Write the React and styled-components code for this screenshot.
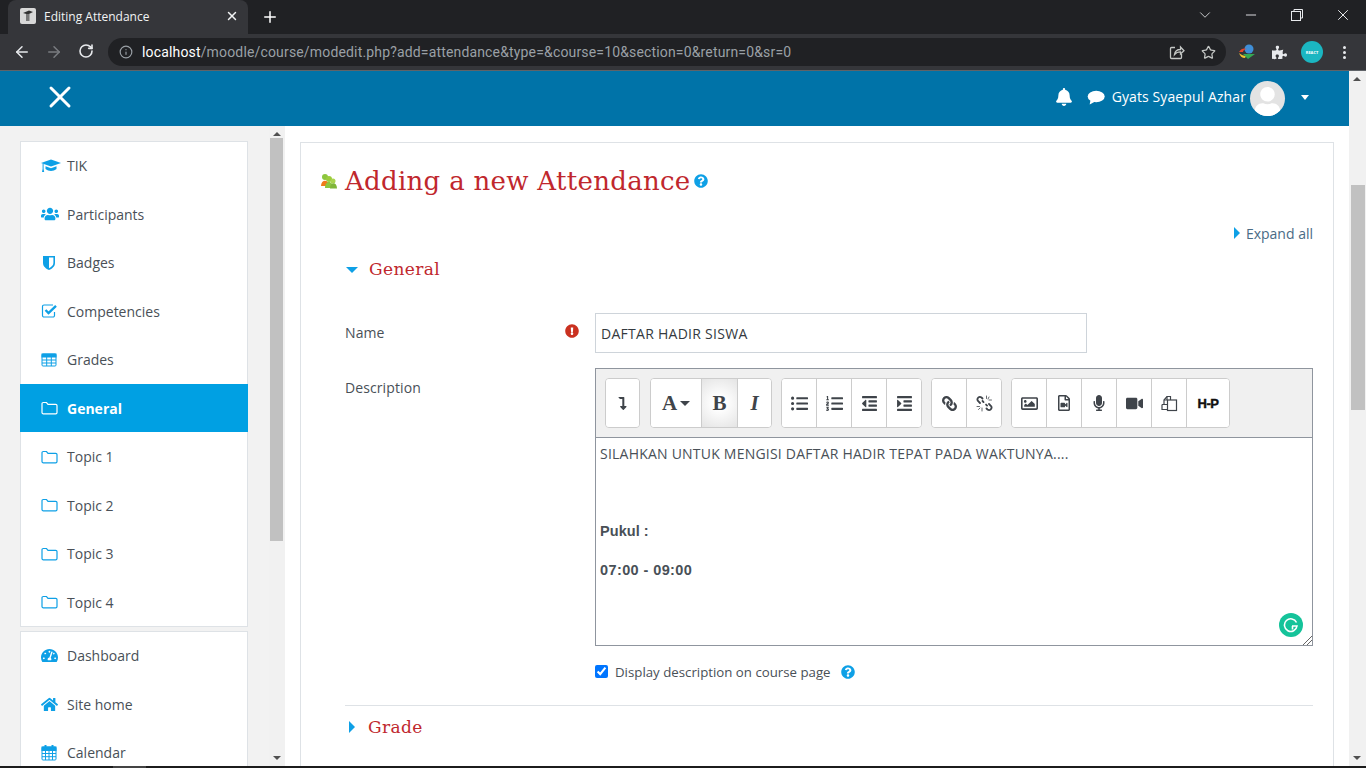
import React from "react";
import styled, { createGlobalStyle } from "styled-components";
import { ArrowLeft, ArrowRight, RotateCw, Info, Star, Plus, X, ChevronDown, Minus } from "lucide-react";
import {
  FaUsers, FaTachometerAlt, FaHome, FaBell, FaPuzzlePiece,
  FaQuestionCircle, FaExclamationCircle, FaListUl, FaListOl, FaOutdent, FaIndent,
  FaLink, FaRegImage, FaRegFileVideo, FaMicrophone, FaVideo,
  FaLevelDownAlt, FaUser,
} from "react-icons/fa";

const GlobalStyle = createGlobalStyle`
  html, body {
    margin: 0;
    padding: 0;
    overflow: hidden;
  }
  body {
    font-family: "Open Sans", "Liberation Sans", sans-serif;
    font-size: 14px;
    color: #495057;
  }
`;

const Page = styled.div`
  width: 1366px;
  height: 768px;
  display: flex;
  flex-direction: column;
  overflow: hidden;
  background: #fff;
`;

/* browser chrome */
const TabStrip = styled.div`
  height: 34px;
  background: #202124;
  display: flex;
  align-items: flex-end;
  padding-left: 8px;
  color: #fff;
  flex-shrink: 0;
`;
const Tab = styled.div`
  width: 240px;
  height: 34px;
  background: #35363a;
  border-radius: 8px 8px 0 0;
  display: flex;
  align-items: center;
  padding: 0 9px 2px 12px;
  box-sizing: border-box;
  font-size: 12px;
  color: #f1f3f4;
`;
const TabTitle = styled.span`
  flex: 1;
  margin-left: 8px;
`;
const NewTab = styled.div`
  width: 44px;
  height: 34px;
  display: flex;
  align-items: center;
  justify-content: center;
`;
const WindowButtons = styled.div`
  margin-left: auto;
  display: flex;
  height: 30px;
  align-self: flex-start;
  align-items: center;
`;
const WindowButton = styled.div`
  width: 46px;
  display: flex;
  justify-content: center;
  color: #e8eaed;
`;
const Toolbar = styled.div`
  height: 36px;
  background: #35363a;
  border-bottom: 1px solid #5f6368;
  display: flex;
  align-items: center;
  flex-shrink: 0;
`;
const NavButton = styled.div`
  width: 32px;
  display: flex;
  justify-content: center;
  color: ${(p) => (p.$off ? "#7a7c80" : "#e8eaed")};
`;
const NavButtons = styled.div`
  display: flex;
  padding-left: 6px;
  margin-right: 6px;
`;
const Omnibox = styled.div`
  width: 1118px;
  height: 28px;
  background: #202124;
  border-radius: 14px;
  display: flex;
  align-items: center;
  padding: 0 10px 0 11px;
  box-sizing: border-box;
  font-family: "Roboto", "Open Sans", sans-serif;
  font-size: 14px;
  color: #9aa0a6;
`;
const Url = styled.span`
  margin-left: 9px;
  flex: 1;
  letter-spacing: 0.16px;
  b {
    font-weight: 400;
    color: #fff;
  }
`;
const OmniActions = styled.div`
  display: flex;
  gap: 16px;
  align-items: center;
  color: #c4c7c5;
`;
const Extensions = styled.div`
  display: flex;
  align-items: center;
  padding-left: 12px;
  color: #e8eaed;
`;
const ProfileDot = styled.div`
  width: 22px;
  height: 22px;
  border-radius: 50%;
  background: #1bb6c1;
  color: #fff;
  font-size: 4px;
  font-weight: 700;
  margin-left: 14px;
  display: flex;
  align-items: center;
  justify-content: center;
`;
const PuzzleSlot = styled.span`
  display: flex;
  margin-left: 16px;
`;
const MenuDots = styled.div`
  display: flex;
  flex-direction: column;
  gap: 2px;
  margin-left: 20px;
  i {
    width: 3px;
    height: 3px;
    border-radius: 50%;
    background: #e8eaed;
  }
`;

/* moodle layout */
const Viewport = styled.div`
  flex: 1;
  min-height: 0;
  display: flex;
`;
const LeftPart = styled.div`
  flex: 1;
  min-width: 0;
  display: flex;
  flex-direction: column;
`;
const Navbar = styled.div`
  height: 55px;
  background: #0073a8;
  display: flex;
  align-items: center;
  padding: 0 40px 0 42px;
  color: #fff;
  flex-shrink: 0;
`;
const MenuClose = styled.span`
  display: flex;
  margin-bottom: 3px;
`;
const NavRight = styled.div`
  margin-left: auto;
  display: flex;
  align-items: center;
  margin-bottom: 3px;
`;
const ChatSlot = styled.span`
  display: flex;
  margin-left: 14px;
`;
const UserName = styled.span`
  font-size: 14px;
  letter-spacing: 0.1px;
  margin: 0 0 1px 7px;
`;
const Avatar = styled.div`
  width: 35px;
  height: 35px;
  border-radius: 50%;
  background: #e3e3e3;
  margin: 0 0 -3px 4px;
  overflow: hidden;
  display: flex;
  align-items: flex-end;
  justify-content: center;
  color: #fff;
`;
const Caret = styled.i`
  width: 0;
  height: 0;
  border-left: 4.5px solid transparent;
  border-right: 4.5px solid transparent;
  border-top: 5px solid #fff;
  margin-left: 16px;
`;
const Workspace = styled.div`
  flex: 1;
  min-height: 0;
  display: flex;
`;
const SidePanel = styled.div`
  width: 269px;
  flex-shrink: 0;
  background: #f2f2f2;
  padding: 14.5px 21px 0 20px;
  box-sizing: border-box;
  overflow: hidden;
`;
const NavGroup = styled.div`
  background: #fff;
  border: 1px solid #dee2e6;
  margin-bottom: 3.5px;
`;
const NavItem = styled.div`
  height: ${(p) => (p.$active ? "48px" : "48.5px")};
  box-sizing: border-box;
  display: flex;
  align-items: center;
  font-size: 14px;
  color: ${(p) => (p.$active ? "#fff" : "#495057")};
  font-weight: ${(p) => (p.$active ? 700 : 400)};
  background: ${(p) => (p.$active ? "#00a0e3" : "#fff")};
  margin: ${(p) => (p.$active ? "0 -1px 0.5px" : "0")};
  padding-left: ${(p) => (p.$active ? "21px" : "20px")};
  & + & {
    border-top: ${(p) => (p.$active ? "none" : "1px solid #dee2e6")};
  }
  &:last-child {
    height: 48px;
  }
`;
const NavIcon = styled.span`
  width: 26px;
  display: flex;
  color: ${(p) => (p.$active ? "#fff" : "#0ea0e6")};
`;
const ScrollTrack = styled.div`
  width: ${(p) => p.$w}px;
  flex-shrink: 0;
  background: #f1f1f1;
  display: flex;
  flex-direction: column;
  align-items: flex-start;
  padding-left: ${(p) => p.$inset}px;
  box-sizing: border-box;
  position: relative;
`;
const ScrollThumb = styled.div`
  width: ${(p) => p.$w}px;
  height: ${(p) => p.$h}px;
  margin-top: ${(p) => p.$top}px;
  background: #c1c1c1;
`;
const ArrowUp = styled.i`
  position: absolute;
  top: 6px;
  left: 4px;
  width: 0;
  height: 0;
  border-left: 4px solid transparent;
  border-right: 4px solid transparent;
  border-bottom: 4px solid #505050;
`;
const ArrowDown = styled.i`
  position: absolute;
  bottom: 6px;
  left: 4px;
  width: 0;
  height: 0;
  border-left: 4px solid transparent;
  border-right: 4px solid transparent;
  border-top: 4px solid #505050;
`;
const Main = styled.div`
  flex: 1;
  min-width: 0;
  padding: 16px 15px 0;
  overflow: hidden;
`;
const Card = styled.div`
  border: 1px solid #dee2e6;
  border-bottom: none;
  height: 800px;
  padding: 0 20px 0 44px;
`;
const TitleRow = styled.div`
  height: 36px;
  margin: 20px 0 0 -25px;
  display: flex;
  align-items: center;
`;
const Title = styled.h2`
  margin: 0 3px 0 8px;
  font-family: "DejaVu Serif", "Liberation Serif", serif;
  font-weight: 400;
  font-size: 26px;
  letter-spacing: 0.3px;
  color: #c0272d;
  white-space: nowrap;
`;
const ExpandRow = styled.div`
  height: 20px;
  margin-top: 24px;
  display: flex;
  justify-content: flex-end;
  align-items: center;
  color: #4a6b85;
  font-size: 14px;
`;
const Legend = styled.div`
  height: 24px;
  margin-top: ${(p) => p.$top}px;
  display: flex;
  align-items: center;
  font-family: "DejaVu Serif", "Liberation Serif", serif;
  font-size: 17px;
  letter-spacing: 0.4px;
  color: #c0272d;
`;
const TriDown = styled.i`
  width: 0;
  height: 0;
  margin: 1px 11px 0 1px;
  border-left: 6.5px solid transparent;
  border-right: 6.5px solid transparent;
  border-top: 6.5px solid #0ea0e6;
`;
const TriRight = styled.i`
  width: 0;
  height: 0;
  margin-left: ${(p) => p.$left || 0}px;
  margin-right: ${(p) => p.$right || 0}px;
  border-top: 6.5px solid transparent;
  border-bottom: 6.5px solid transparent;
  border-left: 6.5px solid #0ea0e6;
`;
const FormRow = styled.div`
  display: flex;
  margin-top: ${(p) => p.$top}px;
`;
const LabelCell = styled.div`
  width: 250px;
  flex-shrink: 0;
  display: flex;
  justify-content: space-between;
  align-items: ${(p) => (p.$top ? "flex-start" : "center")};
  padding: ${(p) => (p.$top ? "8.5px 16px 0 0" : "0 16px 2px 0")};
  box-sizing: border-box;
  font-size: 14px;
  letter-spacing: 0.1px;
  line-height: 21px;
`;
const ErrorIcon = styled.span`
  display: flex;
  color: #ca3120;
  margin-bottom: 2px;
`;
const TextInput = styled.div`
  width: 492px;
  height: 40px;
  border: 1px solid #ced4da;
  box-sizing: border-box;
  display: flex;
  align-items: center;
  padding-left: 5px;
  font-size: 14px;
  letter-spacing: 0.27px;
  color: #343a40;
`;
const Editor = styled.div`
  width: 718px;
  height: 278px;
  border: 1px solid #8f959e;
  box-sizing: border-box;
  position: relative;
`;
const EditorBar = styled.div`
  height: 69px;
  background: #f0f0f0;
  border-bottom: 1px solid #8f959e;
  box-sizing: border-box;
  display: flex;
  padding: 9px 0 0 9px;
  gap: 9px;
`;
const BtnGroup = styled.div`
  display: flex;
  height: 50px;
  background: #fff;
  border: 1px solid #ccc;
  border-radius: 4px;
  box-sizing: border-box;
  overflow: hidden;
  margin-right: ${(p) => p.$after || 0}px;
`;
const EdBtn = styled.div`
  width: ${(p) => p.$w || 35}px;
  box-sizing: border-box;
  display: flex;
  align-items: center;
  justify-content: center;
  color: #3f444a;
  font-family: "Liberation Serif", serif;
  font-size: 21px;
  background: ${(p) => (p.$pressed ? "radial-gradient(circle, #fff 20%, #e4e4e4 100%)" : "#fff")};
  & + & {
    border-left: 1px solid #ccc;
  }
  svg {
    transform: ${(p) => (p.$flip ? "scaleX(-1)" : "none")};
  }
`;
const H5p = styled.span`
  font-family: "Liberation Sans", sans-serif;
  font-weight: 700;
  font-size: 13px;
  color: #111;
  letter-spacing: -0.5px;
  -webkit-text-stroke: 0.4px #111;
`;
const SmallCaret = styled.i`
  width: 0;
  height: 0;
  margin-left: 3px;
  border-left: 5px solid transparent;
  border-right: 5px solid transparent;
  border-top: 5px solid #3f444a;
`;
const EditorBody = styled.div`
  padding: 5px 4px 0;
  font-size: 14px;
  line-height: 21px;
  letter-spacing: 0.22px;
  color: #495057;
  p {
    margin: 0 0 18px;
    height: 21px;
  }
`;
const BoldLine = styled.b`
  display: block;
  font-family: "Liberation Sans", sans-serif;
  font-size: 14.5px;
  line-height: 20px;
  letter-spacing: ${(p) => p.$spacing}px;
`;
const Grammarly = styled.div`
  position: absolute;
  right: 9px;
  bottom: 8px;
  width: 24px;
  height: 24px;
  border-radius: 50%;
  background: #15c39a;
  display: flex;
  align-items: center;
  justify-content: center;
`;
const ResizeGrip = styled.svg`
  position: absolute;
  right: 0;
  bottom: 0;
`;
const CheckRow = styled.label`
  display: flex;
  align-items: center;
  height: 21px;
  margin: 15px 0 0 250px;
  font-size: 13.25px;
  input {
    width: 13px;
    height: 13px;
    margin: 0 7px 0 0;
    accent-color: #0075ff;
  }
`;
const HelpIcon = styled.span`
  display: flex;
  color: #0ea0e6;
  margin-left: ${(p) => p.$left || 0}px;
`;
const Divider = styled.hr`
  border: none;
  border-top: 1px solid #dee2e6;
  margin: 23px 0 0;
`;
const Taskbar = styled.div`
  height: 2px;
  background: #1c1c1c;
  flex-shrink: 0;
  padding-left: 113px;
  i {
    display: block;
    width: 33px;
    height: 2px;
    background: #444;
  }
`;

const CapIcon = () => (
  <svg width="20" height="16" viewBox="0 0 20 16" fill="currentColor">
    <path d="M0 5l10-3.5L20 5 10 8.5z" />
    <path d="M4.5 8.2V11c3 2.6 8 2.6 11 0V8.2l-5.5 2z" />
    <path d="M1.6 5.5h1v5.5l.6 3H1l.6-3z" />
  </svg>
);

const ShieldIcon = () => (
  <svg width="16" height="17" viewBox="0 0 16 17" fill="currentColor">
    <path d="M2 2h12v7c0 3.5-3 5.800-6 7-3-1.200-6-3.500-6-7z" />
    <path d="M8 3.600h4.400V9c0 2.400-2.200 4.200-4.400 5.200z" fill="#fff" />
  </svg>
);

const FolderOutline = () => (
  <svg width="17" height="16" viewBox="0 0 17 16" fill="none" stroke="currentColor" strokeWidth="1.2">
    <path d="M1 3.800A1.300 1.300 0 0 1 2.300 2.500h3.200L7 4.300h7.700A1.300 1.300 0 0 1 16 5.600v6.900a1.300 1.300 0 0 1-1.300 1.300H2.300A1.300 1.300 0 0 1 1 12.500z" />
  </svg>
);

const CheckSquareOutline = () => (
  <svg width="17" height="16" viewBox="0 0 17 16" fill="none" stroke="currentColor">
    <path d="M13.500 9v3.500a1.500 1.500 0 0 1-1.500 1.500H3a1.500 1.500 0 0 1-1.500-1.500v-9A1.500 1.500 0 0 1 3 2h9" strokeWidth="1.2" />
    <path d="M4.500 7l3 3L15 2.800" strokeWidth="2.4" />
  </svg>
);

const GridTable = () => (
  <svg width="16" height="16" viewBox="0 0 16 16" fill="none" stroke="currentColor" strokeWidth="1">
    <rect x="1" y="2" width="14" height="12" rx="1" />
    <rect x="1" y="2" width="14" height="3" fill="currentColor" />
    <path d="M1 8h14M1 11h14M5.700 5v9M10.300 5v9" />
  </svg>
);

const CalendarGrid = () => (
  <svg width="16" height="17" viewBox="0 0 16 17" fill="none" stroke="currentColor" strokeWidth="1">
    <rect x="1" y="3" width="14" height="13" rx="1" />
    <rect x="1" y="3" width="14" height="3.500" fill="currentColor" />
    <path d="M1 9.500h14M1 12.700h14M4.500 6.500V16M8 6.500V16M11.500 6.500V16" />
    <path d="M4.500 1v3M11.500 1v3" strokeWidth="2" />
  </svg>
);

const UnlinkIcon = () => (
  <svg width="17" height="17" viewBox="0 0 17 17" fill="none" stroke="currentColor" strokeLinecap="round">
    <path d="M6.500 3.500L5.500 2.500a2.500 2.500 0 0 0-3.500 3.500l2 2" strokeWidth="1.800" />
    <path d="M6.500 6l5 5" strokeWidth="1.800" strokeDasharray="1.500 3.500" />
    <path d="M10.500 13.500l1 1a2.500 2.500 0 0 0 3.500-3.500l-2-2" strokeWidth="1.800" />
    <path d="M10.500 1v2.500M13 2l-1 2M15.500 5H13M1 11.500h2.500M2.500 14.500l1.500-1.500M6 13v3" strokeWidth="0.8" />
  </svg>
);

const CopyOutline = () => (
  <svg width="17" height="17" viewBox="0 0 17 17" fill="none" stroke="currentColor" strokeWidth="1.200">
    <path d="M3 9.500V5l3-3.500h3.500V5" />
    <path d="M3 5h3V1.500" />
    <path d="M1 9.500h5M1 9.500v5h5" />
    <rect x="6.500" y="5" width="9" height="10.500" />
  </svg>
);

const sideItems = [
  [CapIcon, "TIK"],
  [FaUsers, "Participants", 18],
  [ShieldIcon, "Badges"],
  [CheckSquareOutline, "Competencies"],
  [GridTable, "Grades"],
  [FolderOutline, "General", 0, true],
  [FolderOutline, "Topic 1"],
  [FolderOutline, "Topic 2"],
  [FolderOutline, "Topic 3"],
  [FolderOutline, "Topic 4"],
];
const sideItems2 = [
  [FaTachometerAlt, "Dashboard", 17],
  [FaHome, "Site home", 17],
  [CalendarGrid, "Calendar"],
];

const SideRow = ({ icon: Icon, label, size, active }) => (
  <NavItem $active={active}>
    <NavIcon $active={active}>
      <Icon size={size} />
    </NavIcon>
    {label}
  </NavItem>
);

const Favicon = () => (
  <svg width="16" height="16" viewBox="0 0 16 16">
    <rect width="16" height="16" rx="2" fill="#d8d8d8" />
    <path d="M3 5l6-2.500 4 1.500-5 2.500z" fill="#333" />
    <path d="M6 6v7h3.500V6z" fill="#777" />
  </svg>
);

const AttendanceIcon = () => (
  <svg width="17" height="16" viewBox="0 0 17 16">
    <circle cx="5" cy="4" r="3" fill="#8cc63f" />
    <path d="M1 13c0-7 8-7 8 0z" fill="#f07a1a" />
    <circle cx="9" cy="6" r="3" fill="#9ccc3c" />
    <path d="M5 15c0-8 8-8 8 0z" fill="#8cc63f" />
    <circle cx="13" cy="8" r="2.500" fill="#a9d44f" />
    <path d="M10 15.500c0-7 7-7 7 0z" fill="#7fb539" />
  </svg>
);

const IdmIcon = () => (
  <svg width="18" height="18" viewBox="0 0 18 18">
    <circle cx="11" cy="6" r="4.500" fill="#3f8fd8" />
    <path d="M1 9c2-4 6-4 8-3-3 0-4 2-4 3z" fill="#e8452c" />
    <path d="M1 10c2 2 5 3 7 3l-1 2C4 15 2 13 1 10z" fill="#f4c430" />
    <path d="M5 11l12 0-7 5z" fill="#36a852" />
  </svg>
);

const ShareIcon = () => (
  <svg width="16" height="16" viewBox="0 0 16 16" fill="none" stroke="currentColor" strokeWidth="1.300">
    <path d="M6 3.500H2.500a1 1 0 0 0-1 1v9a1 1 0 0 0 1 1h9a1 1 0 0 0 1-1V10" />
    <path d="M5.500 10.500c.5-3.500 3-5 6-5V3l3.500 3.800L11.500 10V7.800c-2.500 0-4.500.8-6 2.700z" />
  </svg>
);

const RestoreIcon = () => (
  <svg width="12" height="12" viewBox="0 0 12 12" fill="none" stroke="currentColor" strokeWidth="1">
    <rect x="0.500" y="2.500" width="9" height="9" />
    <path d="M3 2.500V.5h8.500V9H9.500" />
  </svg>
);

const ChatBubble = () => (
  <svg width="18" height="15" viewBox="0 0 18 15" fill="currentColor">
    <ellipse cx="9.200" cy="6.500" rx="8.500" ry="5.800" />
    <path d="M3.500 10l-.8 4.500 5.500-3z" />
  </svg>
);

const App = () => (
  <Page>
    <GlobalStyle />
    <TabStrip>
      <Tab>
        <Favicon />
        <TabTitle>Editing Attendance</TabTitle>
        <X size={14} strokeWidth={2.5} />
      </Tab>
      <NewTab>
        <Plus size={18} strokeWidth={2} />
      </NewTab>
      <WindowButtons>
        <WindowButton>
          <ChevronDown size={18} strokeWidth={1.1} />
        </WindowButton>
        <WindowButton>
          <Minus size={16} strokeWidth={1.4} />
        </WindowButton>
        <WindowButton>
          <RestoreIcon />
        </WindowButton>
        <WindowButton>
          <X size={18} strokeWidth={1.3} />
        </WindowButton>
      </WindowButtons>
    </TabStrip>
    <Toolbar>
      <NavButtons>
        <NavButton>
          <ArrowLeft size={18} />
        </NavButton>
        <NavButton $off>
          <ArrowRight size={18} />
        </NavButton>
        <NavButton>
          <RotateCw size={16} strokeWidth={2.4} />
        </NavButton>
      </NavButtons>
      <Omnibox>
        <Info size={14} />
        <Url>
          <b>localhost</b>/moodle/course/modedit.php?add=attendance&amp;type=&amp;course=10&amp;section=0&amp;return=0&amp;sr=0
        </Url>
        <OmniActions>
          <ShareIcon />
          <Star size={15} />
        </OmniActions>
      </Omnibox>
      <Extensions>
        <IdmIcon />
        <PuzzleSlot>
          <FaPuzzlePiece size={15} />
        </PuzzleSlot>
        <ProfileDot>REACT</ProfileDot>
        <MenuDots>
          <i />
          <i />
          <i />
        </MenuDots>
      </Extensions>
    </Toolbar>
    <Viewport>
      <LeftPart>
        <Navbar>
          <MenuClose>
            <X size={36} strokeWidth={2} />
          </MenuClose>
          <NavRight>
            <FaBell size={18} />
            <ChatSlot>
              <ChatBubble />
            </ChatSlot>
            <UserName>Gyats Syaepul Azhar</UserName>
            <Avatar>
              <FaUser size={29} />
            </Avatar>
            <Caret />
          </NavRight>
        </Navbar>
        <Workspace>
          <SidePanel>
            <NavGroup>
              {sideItems.map(([icon, label, size, active]) => (
                <SideRow key={label} icon={icon} label={label} size={size} active={active} />
              ))}
            </NavGroup>
            <NavGroup>
              {sideItems2.map(([icon, label, size]) => (
                <SideRow key={label} icon={icon} label={label} size={size} />
              ))}
            </NavGroup>
          </SidePanel>
          <ScrollTrack $w={16} $inset={1}>
            <ArrowUp />
            <ScrollThumb $w={13} $h={403} $top={12} />
            <ArrowDown />
          </ScrollTrack>
          <Main>
            <Card>
              <TitleRow>
                <AttendanceIcon />
                <Title>Adding a new Attendance</Title>
                <HelpIcon>
                  <FaQuestionCircle size={14} />
                </HelpIcon>
              </TitleRow>
              <ExpandRow>
                <TriRight $right={6} />
                Expand all
              </ExpandRow>
              <Legend $top={14}>
                <TriDown />
                General
              </Legend>
              <FormRow $top={32}>
                <LabelCell>
                  Name
                  <ErrorIcon>
                    <FaExclamationCircle size={14} />
                  </ErrorIcon>
                </LabelCell>
                <TextInput>DAFTAR HADIR SISWA</TextInput>
              </FormRow>
              <FormRow $top={15}>
                <LabelCell $top>Description</LabelCell>
                <Editor>
                  <EditorBar>
                    <BtnGroup $after={1}>
                      <EdBtn $w={33}>
                        <FaLevelDownAlt size={13} />
                      </EdBtn>
                    </BtnGroup>
                    <BtnGroup>
                      <EdBtn $w={50}>
                        <b>A</b>
                        <SmallCaret />
                      </EdBtn>
                      <EdBtn $w={36} $pressed>
                        <b>B</b>
                      </EdBtn>
                      <EdBtn $w={34}>
                        <b>
                          <i>I</i>
                        </b>
                      </EdBtn>
                    </BtnGroup>
                    <BtnGroup>
                      <EdBtn $w={34}>
                        <FaListUl size={17} />
                      </EdBtn>
                      <EdBtn>
                        <FaListOl size={17} />
                      </EdBtn>
                      <EdBtn>
                        <FaOutdent size={17} />
                      </EdBtn>
                      <EdBtn>
                        <FaIndent size={17} />
                      </EdBtn>
                    </BtnGroup>
                    <BtnGroup>
                      <EdBtn $w={34} $flip>
                        <FaLink size={15} />
                      </EdBtn>
                      <EdBtn>
                        <UnlinkIcon />
                      </EdBtn>
                    </BtnGroup>
                    <BtnGroup>
                      <EdBtn $w={34}>
                        <FaRegImage size={17} />
                      </EdBtn>
                      <EdBtn>
                        <FaRegFileVideo size={16} />
                      </EdBtn>
                      <EdBtn>
                        <FaMicrophone size={16} />
                      </EdBtn>
                      <EdBtn>
                        <FaVideo size={17} />
                      </EdBtn>
                      <EdBtn>
                        <CopyOutline />
                      </EdBtn>
                      <EdBtn $w={43}>
                        <H5p>H-P</H5p>
                      </EdBtn>
                    </BtnGroup>
                  </EditorBar>
                  <EditorBody>
                    <p>SILAHKAN UNTUK MENGISI DAFTAR HADIR TEPAT PADA WAKTUNYA....</p>
                    <p>&nbsp;</p>
                    <p>
                      <BoldLine $spacing={0.05}>Pukul :</BoldLine>
                    </p>
                    <p>
                      <BoldLine $spacing={0.4}>07:00 - 09:00</BoldLine>
                    </p>
                  </EditorBody>
                  <Grammarly>
                    <svg width="16" height="16" viewBox="0 0 16 16" fill="none" stroke="#fff" strokeWidth="1.6">
                      <path d="M13.500 5.500A6.300 6.300 0 1 0 14 9H9" />
                      <path d="M9.500 9v3.500" />
                    </svg>
                  </Grammarly>
                  <ResizeGrip width="10" height="10" viewBox="0 0 10 10" stroke="#666" strokeWidth="1">
                    <path d="M1 10L10 1M5 10L10 5" />
                  </ResizeGrip>
                </Editor>
              </FormRow>
              <CheckRow>
                <input type="checkbox" defaultChecked />
                Display description on course page
                <HelpIcon $left={10}>
                  <FaQuestionCircle size={14} />
                </HelpIcon>
              </CheckRow>
              <Divider />
              <Legend $top={9}>
                <TriRight $left={4} $right={13} />
                Grade
              </Legend>
            </Card>
          </Main>
        </Workspace>
      </LeftPart>
      <ScrollTrack $w={17} $inset={2}>
        <ArrowUp />
        <ScrollThumb $w={14} $h={225} $top={114} />
        <ArrowDown />
      </ScrollTrack>
    </Viewport>
    <Taskbar>
      <i />
    </Taskbar>
  </Page>
);

export default App;
